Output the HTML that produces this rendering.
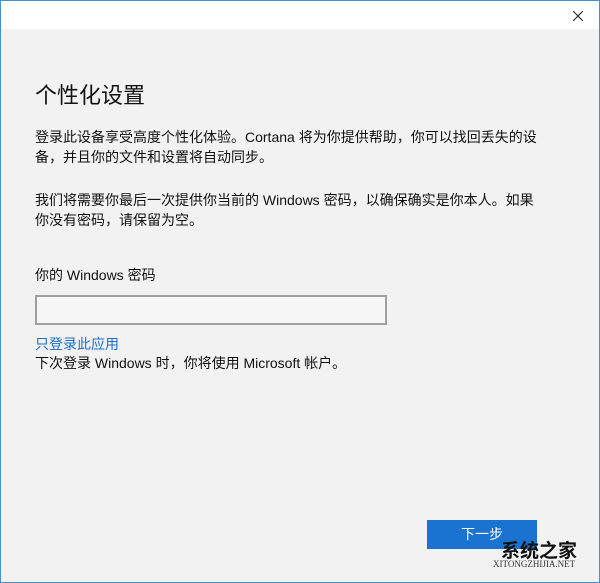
<!DOCTYPE html>
<html><head><meta charset="utf-8"><style>
body{margin:0;width:600px;height:583px;overflow:hidden;font-family:"Liberation Sans","Noto Sans CJK SC",sans-serif;}
.win{position:absolute;left:0;top:0;width:598px;height:581px;border:1px solid #4a90c8;background:#f2f2f2;}
.tb{position:absolute;left:0;top:0;width:598px;height:28px;background:#fff;}
.x{position:absolute;left:572px;top:10px;}
.t{position:absolute;left:34px;color:#111;font-size:14px;line-height:20px;white-space:nowrap;}
.h{font-size:22px;top:80px;line-height:30px;}
.in{position:absolute;left:34px;top:294px;width:348px;height:26px;border:2px solid #a0a0a0;background:#f7f7f7;}
.btn{position:absolute;left:426px;top:519px;width:110px;height:29px;background:#1a73d0;color:#fff;font-size:14px;text-align:center;line-height:29px;}
.wm{position:absolute;left:500px;top:535px;font-size:19px;font-weight:bold;color:#111;}
.wm2{position:absolute;left:492px;top:558px;font-size:9px;color:#333;font-family:"Liberation Serif",serif;}
</style></head><body>
<div class="win">
<div class="tb"><svg class="x" width="10" height="10" viewBox="0 0 10 10"><path d="M0 0L10 10M10 0L0 10" stroke="#222" stroke-width="1.1"/></svg></div>
<div class="t h">个性化设置</div>
<div class="t" style="top:126px">登录此设备享受高度个性化体验。Cortana 将为你提供帮助，你可以找回丢失的设<br>备，并且你的文件和设置将自动同步。</div>
<div class="t" style="top:189px">我们将需要你最后一次提供你当前的 Windows 密码，以确保确实是你本人。如果<br>你没有密码，请保留为空。</div>
<div class="t" style="top:264px">你的 Windows 密码</div>
<div class="in"></div>
<div class="t" style="top:333px;color:#1a6fc8">只登录此应用</div>
<div class="t" style="top:352px">下次登录 Windows 时，你将使用 Microsoft 帐户。</div>
<div class="btn">下一步</div>
<div class="wm">系统之家</div>
<div class="wm2">XITONGZHIJIA.NET</div>
</div>
</body></html>
